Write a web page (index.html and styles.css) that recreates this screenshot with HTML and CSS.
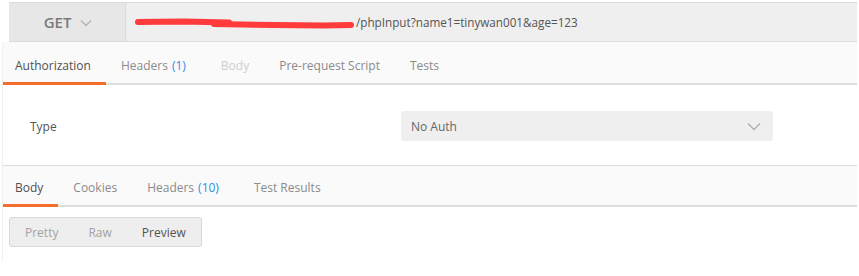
FILE: index.html
```html
<!DOCTYPE html>
<html>
<head>
<meta charset="utf-8">
<link rel="stylesheet" href="styles.css">
</head>
<body>
<div class="urlbar">
  <div class="method">GET
    <svg class="chev" width="12" height="8" viewBox="0 0 12 8"><path d="M1 1.5 L6 6.5 L11 1.5" fill="none" stroke="#b5b5b5" stroke-width="1.4"/></svg>
  </div>
  <div class="url">
    <svg class="scribble" width="222" height="14" viewBox="0 0 222 14"><path d="M4 5 L50 4.5 L95 5.5" fill="none" stroke="#ff3b3b" stroke-width="6" stroke-linecap="round"/><path d="M80 7 L140 8 L190 8.5 L217 8" fill="none" stroke="#ff3b3b" stroke-width="6" stroke-linecap="round"/></svg><span>/phpInput?name1=tinywan001&amp;age=123</span>
  </div>
</div>
<div class="panel">
  <div class="tabs tabs-top">
    <div class="tab active">Authorization</div>
    <div class="tab">Headers <span class="count">(1)</span></div>
    <div class="tab disabled">Body</div>
    <div class="tab">Pre-request Script</div>
    <div class="tab">Tests</div>
  </div>
  <div class="auth">
    <div class="label">Type</div>
    <div class="select">No Auth
      <svg class="chev" width="14" height="9" viewBox="0 0 14 9"><path d="M1 1.5 L7 7.5 L13 1.5" fill="none" stroke="#b0b0b0" stroke-width="1.5"/></svg>
    </div>
  </div>
  <div class="tabs tabs-resp">
    <div class="tab active">Body</div>
    <div class="tab">Cookies</div>
    <div class="tab">Headers <span class="count">(10)</span></div>
    <div class="tab">Test Results</div>
  </div>
  <div class="resp">
    <div class="btngroup">
      <div class="btn">Pretty</div>
      <div class="btn">Raw</div>
      <div class="btn on">Preview</div>
    </div>
  </div>
</div>
</body>
</html>
```
FILE: styles.css
```css
* { box-sizing: border-box; }
html, body { margin: 0; padding: 0; background: #fff; }
body {
  font-family: "Open Sans", "Liberation Sans", sans-serif;
  font-size: 12px;
  color: #505050;
  width: 859px;
  height: 276px;
  overflow: hidden;
}
.urlbar {
  margin: 2px 2px 0 9px;
  height: 40px;
  display: flex;
  border-top: 1px solid #dcdcdc;
  border-bottom: 1px solid #dcdcdc;
  background: #efefef;
}
.method {
  width: 117px;
  background: #e7e7e7;
  border-right: 1px solid #dadada;
  display: flex;
  align-items: center;
  justify-content: center;
  gap: 9px;
  font-size: 15px;
  font-weight: 600;
  color: #7a7a7a;
  padding-left: 2px;
}
.method .chev { margin-top: 1px; }
.url {
  flex: 1;
  display: flex;
  align-items: center;
  padding-left: 8px;
  color: #555;
  font-size: 11.7px;
  white-space: nowrap;
}
.scribble { flex: none; margin-top: 3px; }
.panel {
  margin-left: 2px;
  margin-right: 2px;
  border-left: 1px solid #f0f0f0;
  height: 220px;
}
.tabs {
  display: flex;
  background: #fafafa;
  border-bottom: 2px solid #dedede;
  height: 43px;
}
.tab {
  padding: 6px 15px 0 15px;
  display: flex;
  align-items: center;
  color: #8a8a8a;
  font-size: 12px;
  border-bottom: 3px solid transparent;
  margin-bottom: -2px;
}
.tab:first-child { padding-left: 12px; }
.tab.active { color: #505050; border-bottom-color: #f26e2a; }
.tab.disabled { color: #cfcfcf; }
.count { color: #2d8ee8; margin-left: 4px; margin-right: 5px; }
.auth {
  height: 80px;
  display: flex;
  align-items: center;
  padding-top: 2px;
}
.label { width: 398px; padding-left: 27px; font-size: 12px; color: #555; }
.select {
  width: 372px;
  height: 30px;
  background: #efefef;
  border-radius: 3px;
  display: flex;
  align-items: center;
  justify-content: space-between;
  padding: 0 12px 0 10px;
  color: #666;
  font-size: 12px;
}
.tabs-resp {
  border-top: 1px solid #dedede;
  height: 42px;
}
.tabs-resp .tab { padding-top: 4px; }
.resp { padding: 10px 0 0 6px; }
.btngroup {
  display: inline-flex;
  width: 193px;
  height: 30px;
  background: #eeeeee;
  border: 1px solid #d9d9d9;
  border-radius: 3px;
  align-items: center;
  padding-left: 15px;
  gap: 30px;
  font-size: 12px;
}
.btn { color: #a3a3a3; }
.btn.on { color: #555; }
```
